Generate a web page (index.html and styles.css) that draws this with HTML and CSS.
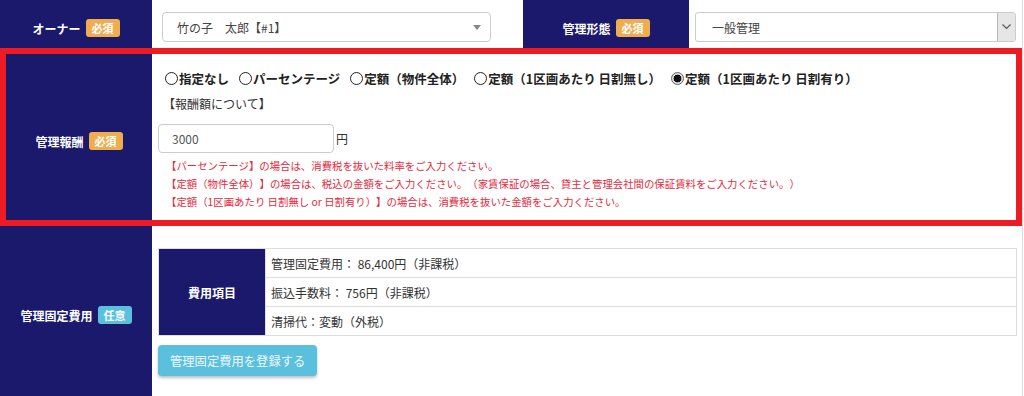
FILE: index.html
```html
<!DOCTYPE html>
<html lang="ja">
<head>
    <meta charset="UTF-8">
    <meta name="viewport" content="width=device-width, initial-scale=1.0">
    <title>管理設定</title>
    <link rel="stylesheet" href="styles.css">
</head>
<body>
    <div class="page">
        <!-- owner / management type -->
        <div class="row row-top">
            <div class="label">オーナー<span class="badge req">必須</span></div>
            <div class="cell cell-owner">
                <div class="select select-owner">
                    <span>竹の子　太郎【#1】</span>
                    <svg class="caret" width="8" height="5" viewBox="0 0 8 5"><path d="M0 0h8L4 5z" fill="#888"/></svg>
                </div>
            </div>
            <div class="label">管理形態<span class="badge req">必須</span></div>
            <div class="cell cell-type">
                <div class="select select-native">
                    <span>一般管理</span>
                    <span class="drop">
                        <svg width="9" height="6" viewBox="0 0 9 6"><path d="M0.5 0.5L4.5 4.5L8.5 0.5" fill="none" stroke="#555" stroke-width="1.1"/></svg>
                    </span>
                </div>
            </div>
        </div>

        <!-- management fee -->
        <div class="row row-fee">
            <div class="label">管理報酬<span class="badge req">必須</span></div>
            <div class="cell cell-fee">
                <div class="radios">
                    <label><input type="radio" name="fee">指定なし</label>
                    <label><input type="radio" name="fee">パーセンテージ</label>
                    <label><input type="radio" name="fee">定額（物件全体）</label>
                    <label><input type="radio" name="fee">定額（1区画あたり 日割無し）</label>
                    <label><input type="radio" name="fee" checked>定額（1区画あたり 日割有り）</label>
                </div>
                <p class="note-title">【報酬額について】</p>
                <div class="amount">
                    <input type="text" class="amount-input" value="3000">
                    <span>円</span>
                </div>
                <ul class="notes">
                    <li>【パーセンテージ】の場合は、消費税を抜いた料率をご入力ください。</li>
                    <li>【定額（物件全体）】の場合は、税込の金額をご入力ください。（家賃保証の場合、貸主と管理会社間の保証賃料をご入力ください。）</li>
                    <li>【定額（1区画あたり 日割無し or 日割有り）】の場合は、消費税を抜いた金額をご入力ください。</li>
                </ul>
            </div>
        </div>

        <!-- fixed costs -->
        <div class="row row-fixed">
            <div class="label">管理固定費用<span class="badge opt">任意</span></div>
            <div class="cell cell-fixed">
                <table class="cost-table">
                    <tr>
                        <th rowspan="3">費用項目</th>
                        <td>管理固定費用： 86,400円（非課税）</td>
                    </tr>
                    <tr>
                        <td>振込手数料： 756円（非課税）</td>
                    </tr>
                    <tr>
                        <td>清掃代：変動（外税）</td>
                    </tr>
                </table>
                <button class="btn-info">管理固定費用を登録する</button>
            </div>
        </div>
    </div>
</body>
</html>
```

FILE: styles.css
```css
* {
    box-sizing: border-box;
}
body {
    margin: 0;
    font-family: "Noto Sans CJK JP", "Noto Sans", sans-serif;
    font-size: 12px;
    color: #333;
    background-color: #fff;
    overflow: hidden;
    text-spacing-trim: space-all;
}
.page {
    width: 1023px;
    border-right: 1px solid #ddd;
}
.row {
    display: grid;
}
.row-top {
    grid-template-columns: 152px 371px 166px 1fr;
    height: 48px;
}
.row-fee {
    grid-template-columns: 146px 1fr;
    border: 6px solid #ed1c24;
    height: 178px;
}
.row-fixed {
    grid-template-columns: 152px 1fr;
    height: 170px;
}
.label {
    display: flex;
    align-items: center;
    justify-content: center;
    gap: 5px;
    padding-top: 8px;
    background-color: #1a196b;
    color: #fff;
    font-weight: bold;
    font-size: 12px;
}
.badge {
    display: inline-block;
    height: 18px;
    line-height: 18px;
    padding: 0 6px;
    border-radius: 3px;
    font-size: 11px;
    font-weight: bold;
    color: #fff;
}
.badge.req {
    background-color: #f0ad4e;
}
.badge.opt {
    background-color: #5bc0de;
}

/* selects */
.cell-owner {
    padding: 12px 32px 6px 10px;
}
.cell-type {
    padding: 12px 6px 6px 6px;
}
.select {
    display: flex;
    align-items: center;
    height: 30px;
    border: 1px solid #ccc;
    background-color: #fff;
    color: #444;
    font-size: 12px;
}
.select-owner {
    border-radius: 4px;
    padding: 0 9px 0 14px;
    justify-content: space-between;
}
.select-native {
    border-radius: 3px;
    padding-left: 16px;
}
.select-native span:first-child {
    flex: 1;
}
.drop {
    display: flex;
    align-items: center;
    justify-content: center;
    width: 18px;
    height: 28px;
    background-color: #e6e6e6;
    border-left: 1px solid #bbb;
}

/* fee row */
.cell-fee {
    padding: 12px 6px 0 6px;
}
.radios {
    display: flex;
    align-items: center;
    gap: 10px;
    height: 24px;
    padding-left: 7px;
    font-weight: bold;
    font-size: 12.5px;
    color: #222;
}
.radios label {
    display: flex;
    align-items: center;
    gap: 1px;
}
.radios input {
    appearance: none;
    margin: 0;
    width: 13px;
    height: 13px;
    border: 1px solid #222;
    border-radius: 50%;
    background-color: #fff;
}
.radios input:checked {
    border-color: #666;
    background: radial-gradient(circle, #111 0 3.6px, #ddd 4.2px 100%);
}
.note-title {
    margin: 4px 0 0 5px;
    line-height: 20px;
    color: #333;
}
.amount {
    display: flex;
    align-items: center;
    gap: 2px;
    margin-top: 10px;
}
.amount-input {
    width: 176px;
    height: 29px;
    padding: 0 13px;
    border: 1px solid #ccc;
    border-radius: 4px;
    font-family: inherit;
    font-size: 12px;
    color: #555;
}
.notes {
    list-style: none;
    margin: 4px 0 0 8px;
    padding: 0;
    color: #e8283c;
    font-size: 10.4px;
    line-height: 18px;
}

/* fixed costs row */
.cell-fixed {
    padding: 22px 5px 0 6px;
}
.cost-table {
    width: 100%;
    border-collapse: collapse;
}
.cost-table th,
.cost-table td {
    border: 1px solid #ddd;
    height: 29px;
    padding: 0 5px;
}
.cost-table th {
    width: 107px;
    background-color: #1a196b;
    color: #fff;
    font-weight: bold;
}
.cost-table td {
    color: #333;
}
.btn-info {
    margin-top: 9px;
    height: 31px;
    padding: 0 12px;
    border: none;
    border-radius: 4px;
    background-color: #5bc0de;
    color: #eef8fc;
    font-family: inherit;
    font-size: 12.3px;
    box-shadow: 0 2px 3px rgba(0,0,0,0.25);
    cursor: pointer;
}
```
